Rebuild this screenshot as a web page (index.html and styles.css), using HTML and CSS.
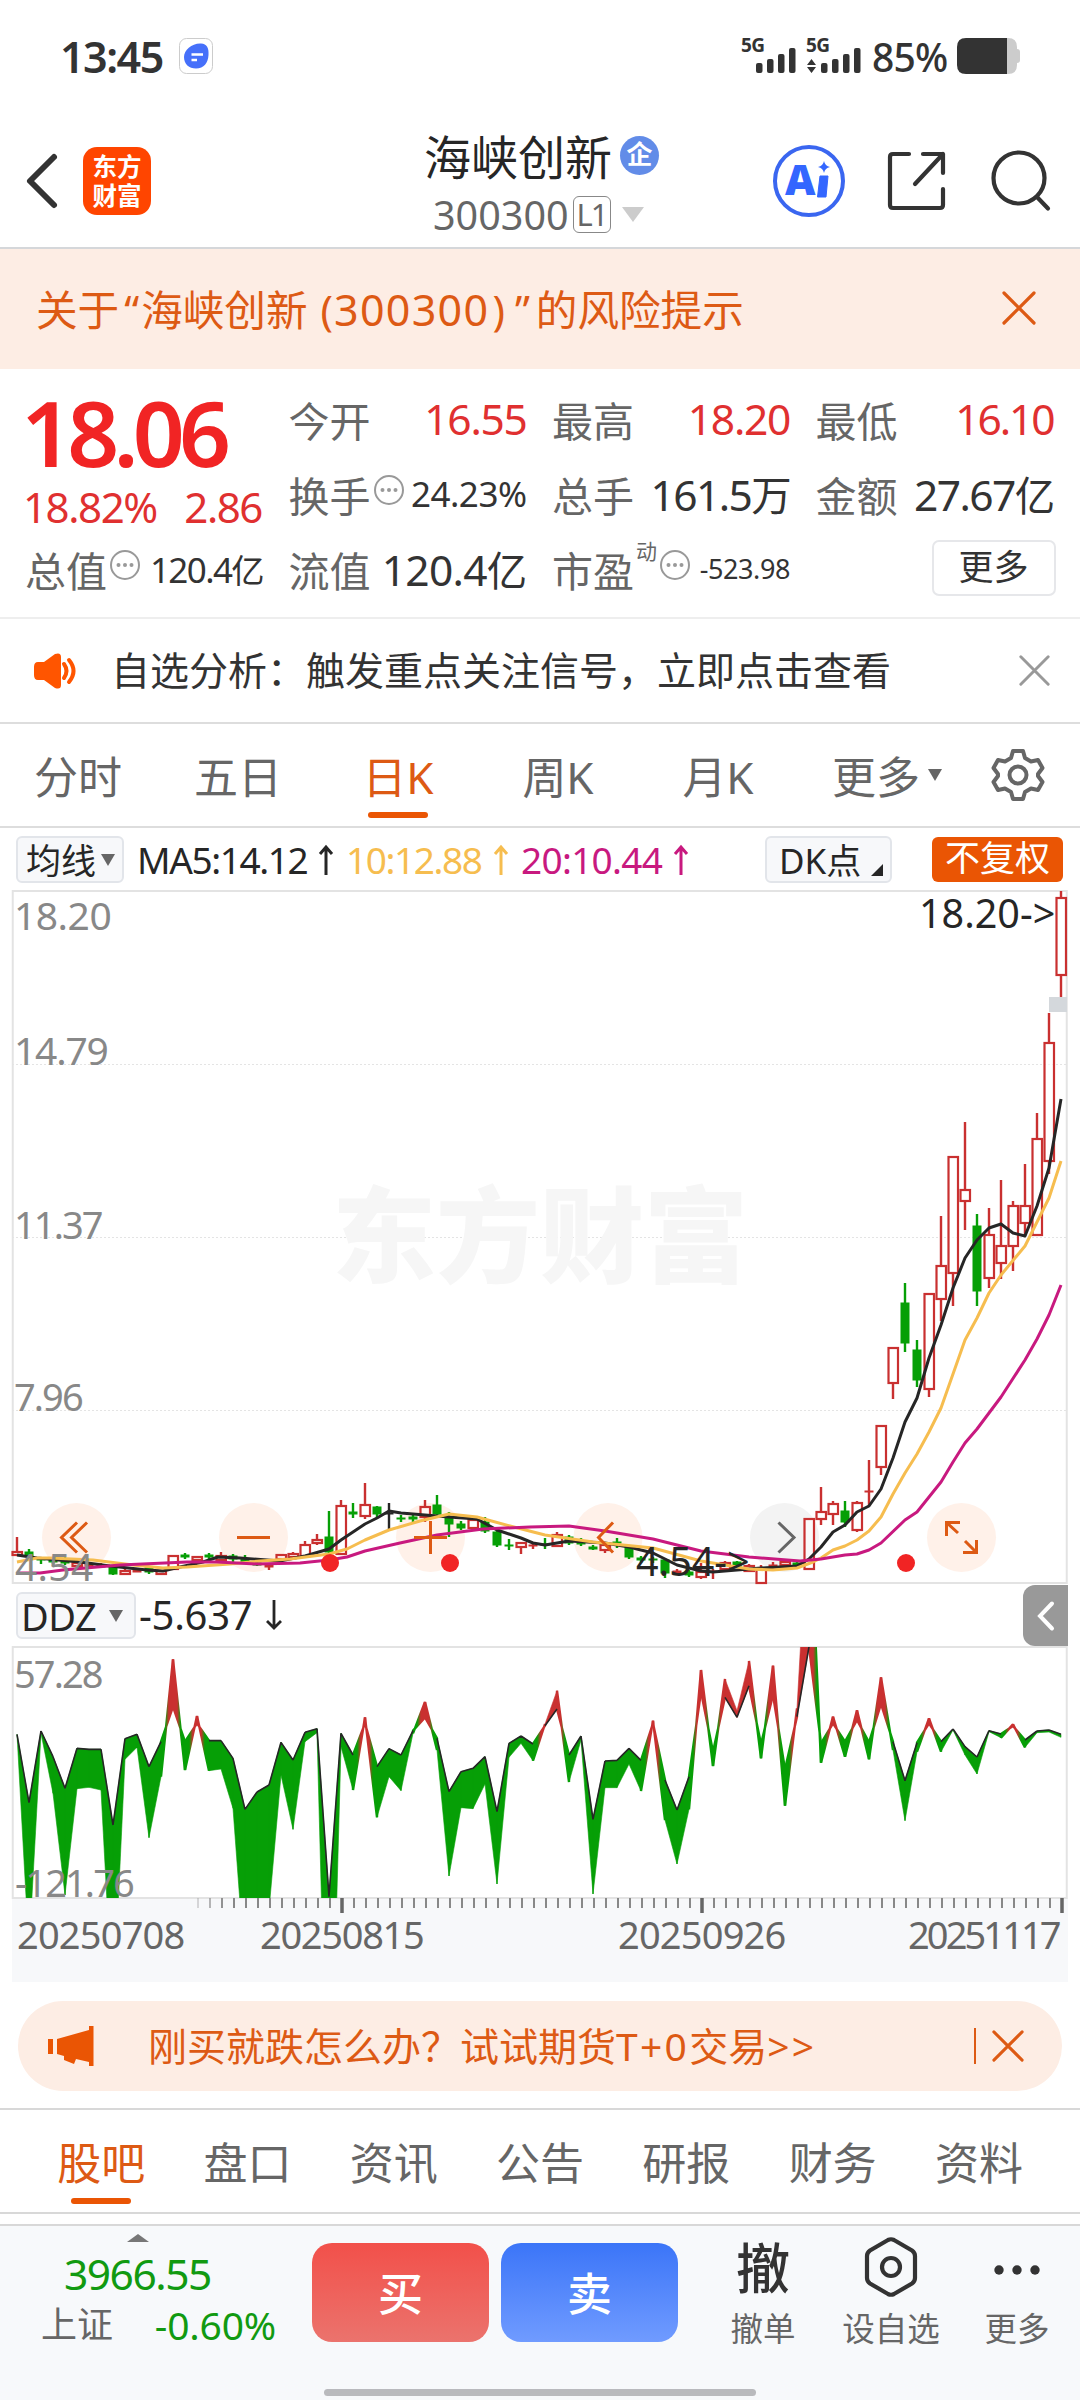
FILE: index.html
```html
<!DOCTYPE html>
<html lang="zh-CN">
<head>
    <meta charset="UTF-8">
    <meta name="viewport" content="width=device-width, initial-scale=1.0">
    <title>海峡创新 300300</title>
    <link rel="stylesheet" href="styles.css">
</head>
<body>
    <svg class="defs" width="0" height="0">
        <symbol id="close" viewBox="0 0 34 34">
            <path d="M2 2L32 32M32 2L2 32" fill="none" stroke="currentColor" stroke-width="3.2" stroke-linecap="round"/>
        </symbol>
        <symbol id="info" viewBox="0 0 32 32">
            <circle cx="16" cy="16" r="14" fill="none" stroke="#999" stroke-width="2"/>
            <circle cx="9.5" cy="16" r="2" fill="#999"/>
            <circle cx="16" cy="16" r="2" fill="#999"/>
            <circle cx="22.5" cy="16" r="2" fill="#999"/>
        </symbol>
    </svg>

    <!-- Barra de estado -->
    <div class="status-bar">
        <span class="clock">13:45</span>
        <svg class="app-badge" width="34" height="36" viewBox="0 0 34 36">
            <rect x="0.5" y="0.5" width="33" height="35" rx="7" fill="#fff" stroke="#ccc"/>
            <path d="M5 19C5 12 13 5 22 5.500C28 6 30 10 29.500 17C29 25 25 30.500 17 30.500C10 30.500 5 26 5 19Z" fill="#4670fa"/>
            <path d="M12.500 16.500H24M12.500 22H18" stroke="#fff" stroke-width="2.400"/>
        </svg>
        <svg class="signals" width="124" height="40" viewBox="740 38 124 40">
            <g fill="#333">
                <text x="741" y="54" class="net">5G</text>
                <rect x="756" y="65" width="6.500" height="10" rx="2"/>
                <rect x="767" y="61" width="6.500" height="14" rx="2"/>
                <rect x="778" y="56" width="6.500" height="19" rx="2"/>
                <rect x="789" y="50" width="6.500" height="25" rx="2"/>
                <text x="806" y="54" class="net">5G</text>
                <path d="M811.500 61L816 67H807ZM811.500 75L816 69H807Z"/>
                <rect x="821" y="65" width="6.500" height="10" rx="2"/>
                <rect x="832" y="61" width="6.500" height="14" rx="2"/>
                <rect x="843" y="56" width="6.500" height="19" rx="2"/>
                <rect x="854" y="50" width="6.500" height="25" rx="2"/>
            </g>
        </svg>
        <span class="battery-text">85%</span>
        <svg class="battery" width="63" height="36" viewBox="0 0 63 36">
            <path d="M50 0H51Q60 0 60 9V11Q63 11 63 14V22Q63 25 60 25V27Q60 36 51 36H50Z" fill="#ccc"/>
            <path d="M9 0H50V36H9Q0 36 0 27V9Q0 0 9 0Z" fill="#333"/>
        </svg>
    </div>

    <header class="header">
        <svg class="back" width="32" height="56" viewBox="0 0 32 56">
            <path d="M28 4L4 28L28 52" fill="none" stroke="#333" stroke-width="6" stroke-linecap="round" stroke-linejoin="round"/>
        </svg>
        <div class="logo">东方<br>财富</div>
        <div class="title">
            <div class="title-name">海峡创新<span class="badge">企</span></div>
            <div class="title-code">300300<span class="level">L1</span><i class="caret"></i></div>
        </div>
        <svg class="ai" width="74" height="74" viewBox="0 0 74 74">
            <circle cx="37" cy="37" r="34" fill="none" stroke="#3a66f0" stroke-width="4"/>
            <text x="13" y="51" class="ai-a">A</text>
            <path d="M48 32H56L54 53H45.500Z" fill="#3366ff" stroke="#3366ff" stroke-linejoin="round"/>
            <path d="M52 17Q53 22 58 23Q53 24 52 29Q51 24 46 23Q51 22 52 17Z" fill="#3366ff"/>
        </svg>
        <svg class="share" width="60" height="60" viewBox="0 0 60 60">
            <path d="M22 3H6Q3 3 3 6V54Q3 57 6 57H53Q56 57 56 54V38M36 3H56V22M56 3L28 33" fill="none" stroke="#333" stroke-width="4.200" stroke-linecap="round" stroke-linejoin="round"/>
        </svg>
        <svg class="search" width="60" height="62" viewBox="0 0 60 62">
            <circle cx="28" cy="28" r="25.500" fill="none" stroke="#333" stroke-width="4.200"/>
            <path d="M46 47L57 58.500" stroke="#333" stroke-width="4.200" stroke-linecap="round"/>
        </svg>
    </header>

    <div class="notice">
        <span class="notice-text">关于<i class="quote-l">“</i>海峡创新<i class="paren-l">(</i><i class="notice-code">300300</i><i class="paren-r">)</i><i class="quote-r">”</i>的风险提示</span>
        <svg width="34" height="34"><use href="#close"/></svg>
    </div>

    <!-- Cotización -->
    <section class="quote">
        <div class="quote-main">
            <div class="price">18.06</div>
            <div class="change"><span>18.82%</span><span>2.86</span></div>
        </div>
        <div class="cell"><label>今开</label><b class="up">16.55</b></div>
        <div class="cell"><label>最高</label><b class="up">18.20</b></div>
        <div class="cell"><label>最低</label><b class="up up-low">16.10</b></div>
        <div class="cell"><label>换手</label><svg class="info" width="32" height="32"><use href="#info"/></svg><b class="mid">24.23%</b></div>
        <div class="cell"><label>总手</label><b>161.5<u>万</u></b></div>
        <div class="cell"><label>金额</label><b>27.67<u>亿</u></b></div>
        <div class="cell"><label>总值</label><svg class="info" width="32" height="32"><use href="#info"/></svg><b class="mid mid-cap">120.4<u>亿</u></b></div>
        <div class="cell"><label>流值</label><b class="wide">120.4<u>亿</u></b></div>
        <div class="cell"><label>市盈</label><small>动</small><svg class="info" width="32" height="32"><use href="#info"/></svg><b class="tiny">-523.98</b></div>
        <div class="cell cell-more"><span class="more-btn">更多</span></div>
    </section>

    <div class="analysis">
        <svg width="46" height="38" viewBox="0 0 46 38">
            <path d="M5 10H11L22 2Q28 0 28 5V33Q28 38 22 36L11 28H5Q1 28 1 23V15Q1 10 5 10Z" fill="#ff5500"/>
            <path d="M31 12Q36 19 31 26M36 8Q45 19 36 30" fill="none" stroke="#ff5500" stroke-width="4" stroke-linecap="round"/>
        </svg>
        <span class="analysis-text">自选分析：触发重点关注信号，立即点击查看</span>
        <svg class="analysis-close" width="31" height="31"><use href="#close"/></svg>
    </div>

    <nav class="periods">
        <a>分时</a>
        <a>五日</a>
        <a class="active">日K</a>
        <a>周K</a>
        <a>月K</a>
        <a class="period-more">更多<i class="caret-sm"></i></a>
        <svg width="54" height="54" viewBox="0 0 54 54">
            <path d="M22 3H32L34 10L40 13.500L47 12L51.500 20L47 26V28L51.500 34L47 42L40 40.500L34 44L32 51H22L20 44L14 40.500L7 42L2.500 34L7 28V26L2.500 20L7 12L14 13.500L20 10Z" fill="none" stroke="#666" stroke-width="4" stroke-linejoin="round"/>
            <circle cx="27" cy="27" r="8.500" fill="none" stroke="#666" stroke-width="4"/>
        </svg>
    </nav>

    <!-- Gráfico principal -->
    <div class="indicator">
        <span class="chip"><u>均线</u><i class="caret-sm"></i></span>
        <span class="ma ma5">MA5:14.12<svg width="18" height="32" viewBox="0 0 18 32"><path d="M9 31V4M3 10L9 3L15 10" fill="none" stroke="currentColor" stroke-width="3"/></svg></span>
        <span class="ma ma10">10:12.88<svg width="18" height="32" viewBox="0 0 18 32"><path d="M9 31V4M3 10L9 3L15 10" fill="none" stroke="currentColor" stroke-width="3"/></svg></span>
        <span class="ma ma20">20:10.44<svg width="18" height="32" viewBox="0 0 18 32"><path d="M9 31V4M3 10L9 3L15 10" fill="none" stroke="currentColor" stroke-width="3"/></svg></span>
        <span class="chip chip-dk"><u>DK点</u><i class="corner"></i></span>
        <span class="chip-adjust">不复权</span>
    </div>

    <svg class="kline" id="kline" width="1056" height="694" viewBox="12 890 1056 694">
        <g stroke="#e4e4e4" stroke-dasharray="2 2">
            <path d="M12 1064.500H1067M12 1237.500H1067M12 1410.500H1067"/>
        </g>
        <rect x="12.750" y="891" width="1054" height="692" fill="none" stroke="#e3e3e3" stroke-width="2"/>
        <text x="332" y="1275" class="watermark">东方财富</text>
        <g fill="#fff1e9">
            <circle cx="76.500" cy="1537.500" r="34.500"/>
            <circle cx="253.500" cy="1537.500" r="34.500"/>
            <circle cx="430.500" cy="1537.500" r="34.500"/>
            <circle cx="608" cy="1537.500" r="34.500"/>
            <circle cx="784.500" cy="1537.500" r="34.500" fill="#f3f3f3"/>
            <circle cx="961.500" cy="1537.500" r="34.500"/>
        </g>
        <rect x="1049" y="997" width="18" height="15" fill="#d4d8dc"/>
        <g id="candles" stroke-width="2.400"></g>
        <g fill="none" stroke-width="3" stroke-linejoin="round">
            <path id="ma5" stroke="#262626"/>
            <path id="ma10" stroke="#f6bd4f"/>
            <path id="ma20" stroke="#c8197f"/>
        </g>
        <g fill="#f12424">
            <circle cx="330" cy="1563" r="9"/>
            <circle cx="450" cy="1563" r="9"/>
            <circle cx="906" cy="1563" r="9"/>
        </g>
        <g fill="none" stroke="#dd5a14" stroke-width="3">
            <path d="M77 1522.500L61.500 1537.500L77 1552.500M87 1522.500L71.500 1537.500L87 1552.500"/>
            <path d="M237 1537.500H270"/>
            <path d="M414 1537.500H447M430.500 1521V1554"/>
            <path d="M613 1522.500L598.500 1537.500L613 1552.500"/>
            <path d="M778.500 1522.500L794 1537.500L778.500 1552.500" stroke="#666"/>
            <path d="M946.500 1536V1522.500H960M946.500 1522.500L958 1533M976.500 1540V1552.500H963M976.500 1552.500L965 1541"/>
        </g>
        <g class="axis-label">
            <text x="14" y="930">18.20</text>
            <text x="14" y="1065" class="narrow">14.79</text>
            <text x="14" y="1239" class="narrower">11.37</text>
            <text x="14" y="1411" class="narrower">7.96</text>
            <text x="15" y="1581" class="low">4.54</text>
        </g>
        <text x="919" y="928" class="mark">18.20-&gt;</text>
        <text x="636" y="1576" class="mark">4.54-&gt;</text>
    </svg>

    <!-- DDZ -->
    <div class="ddz-row">
        <span class="chip chip-ddz">DDZ<i class="caret-sm"></i></span>
        <span class="ddz-value">-5.637<svg width="18" height="32" viewBox="0 0 18 32"><path d="M9 1V29M2 22L9 29L16 22" fill="none" stroke="currentColor" stroke-width="2.800"/></svg></span>
        <span class="side-toggle">
            <svg width="18" height="30" viewBox="0 0 18 30"><path d="M15 2.500L3 15L15 27.500" fill="none" stroke="#fff" stroke-width="4" stroke-linecap="round"/></svg>
        </span>
    </div>

    <svg class="ddz" id="ddz" width="1056" height="252" viewBox="12 -1 1056 252">
        <rect x="12.750" y="0" width="1054" height="251" fill="none" stroke="#e3e3e3" stroke-width="2"/>
        <g id="ddzArea"></g>
        <path id="ddzLine" fill="none" stroke="#262626" stroke-width="1.600"/>
        <g class="axis-label">
            <text x="14" y="41" class="narrower">57.28</text>
            <text x="15" y="250" class="narrower">-121.76</text>
        </g>
    </svg>

    <div class="dates">
        <svg id="ticks" width="1056" height="16" viewBox="12 0 1056 16"></svg>
        <div class="dates-row">
            <span>20250708</span>
            <span>20250815</span>
            <span>20250926</span>
            <span>20251117</span>
        </div>
    </div>

    <div class="promo">
        <svg width="46" height="40" viewBox="0 0 46 40">
            <path d="M0 13H5V28H0ZM9 13L41 4V0H45.500V40H41V36L28 33L26 38L16 34V30L9 28Z" fill="#ea5504"/>
        </svg>
        <span class="promo-text">刚买就跌怎么办？试试期货<i>T+0</i>交易<i>&gt;&gt;</i></span>
        <svg class="promo-close" width="33" height="33"><use href="#close"/></svg>
    </div>

    <nav class="tabs">
        <a class="active">股吧</a>
        <a>盘口</a>
        <a>资讯</a>
        <a>公告</a>
        <a>研报</a>
        <a>财务</a>
        <a>资料</a>
    </nav>

    <footer class="bottom">
        <div class="index">
            <i class="caret-up"></i>
            <div class="index-value">3966.55</div>
            <div class="index-row"><span>上证</span><b>-0.60%</b></div>
        </div>
        <a class="trade buy">买</a>
        <a class="trade sell">卖</a>
        <div class="action action-cancel">
            <span class="glyph">撤</span>
            <span>撤单</span>
        </div>
        <div class="action action-fav">
            <svg width="60" height="64" viewBox="0 0 60 64">
                <path d="M27 5Q30 3.500 33 5L51 15.500Q54 17.500 54 21V43Q54 46.500 51 48.500L33 59Q30 60.500 27 59L9 48.500Q6 46.500 6 43V21Q6 17.500 9 15.500Z" fill="none" stroke="#333" stroke-width="4.200"/>
                <circle cx="30" cy="32" r="9" fill="none" stroke="#333" stroke-width="4.200"/>
            </svg>
            <span>设自选</span>
        </div>
        <div class="action action-more">
            <svg width="60" height="64" viewBox="0 0 60 64">
                <circle cx="12" cy="35" r="4.700" fill="#333"/>
                <circle cx="30" cy="35" r="4.700" fill="#333"/>
                <circle cx="48" cy="35" r="4.700" fill="#333"/>
            </svg>
            <span>更多</span>
        </div>
        <div class="home-bar"></div>
    </footer>

    <script src="chart.js"></script>
</body>
</html>
```

FILE: styles.css
```css
* {
    box-sizing: border-box;
}
body {
    margin: 0;
    width: 1080px;
    height: 2400px;
    overflow: hidden;
    background-color: #fff;
    color: #333;
    font-family: 'Noto Sans', 'Noto Sans CJK SC', sans-serif;
}
svg {
    display: block;
    flex: none;
    overflow: visible;
}
i, u, b {
    font-style: normal;
    font-weight: normal;
    text-decoration: none;
}
.defs {
    position: absolute;
}

/* Barra de estado */
.status-bar {
    display: flex;
    align-items: center;
    height: 112px;
    padding: 0 60px;
}
.clock {
    width: 119px;
    font-size: 43px;
    font-weight: 600;
    letter-spacing: -1.5px;
}
.signals {
    margin-left: 527px;
}
.net {
    font-size: 19px;
    font-weight: 700;
    letter-spacing: -0.5px;
}
.battery-text {
    width: 93px;
    padding-left: 8px;
    font-size: 39px;
    font-weight: 500;
    letter-spacing: -0.8px;
}

/* Cabecera */
.header {
    display: flex;
    align-items: center;
    height: 137px;
    border-bottom: 2px solid #d5d7da;
    padding: 2px 0 0 26px;
}
.logo {
    width: 68px;
    height: 68px;
    margin-left: 25px;
    padding-top: 5px;
    border-radius: 14px;
    background-color: #ff4500;
    color: #fff;
    font-size: 24.500px;
    font-weight: 700;
    line-height: 29px;
    text-align: center;
}
.title {
    width: 252px;
    margin-left: 273px;
    padding-top: 2px;
}
.title-name, .title-code {
    display: flex;
    align-items: center;
    white-space: nowrap;
}
.title-name {
    height: 66px;
    padding-bottom: 5px;
    font-size: 47px;
    color: #262626;
}
.badge {
    width: 39px;
    height: 39px;
    margin: 3px 0 0 8px;
    border-radius: 50%;
    background-color: #628ce8;
    color: #fff;
    font-size: 26px;
    font-weight: 700;
    line-height: 36px;
    text-align: center;
}
.title-code {
    height: 50px;
    padding-left: 9px;
    font-size: 39.500px;
    color: #666;
}
.level {
    width: 38px;
    height: 37px;
    margin-left: 4px;
    border: 1.500px solid #888;
    border-radius: 6px;
    font-size: 31px;
    line-height: 34px;
    text-align: center;
    letter-spacing: -2px;
}
.caret {
    margin-left: 11px;
    border: 11px solid transparent;
    border-top: 15px solid #ccc;
    border-bottom: 0;
}
.ai {
    margin-left: 96px;
}
.ai-a {
    font-family: 'Noto Sans', sans-serif;
    font-size: 42px;
    font-weight: 900;
    fill: #3366ff;
}
.share {
    margin-left: 41px;
}
.search {
    margin-left: 44px;
}

/* Aviso */
.notice {
    display: flex;
    align-items: center;
    justify-content: space-between;
    height: 120px;
    padding: 0 44px 2px 36px;
    background-color: #fdede4;
    color: #dd5a14;
}
.notice-text {
    font-size: 41.600px;
    white-space: nowrap;
}
.quote-l {
    margin: 0 2px 0 5px;
}
.quote-r {
    margin: 0 6px 0 7px;
}
.notice-code {
    font-size: 43px;
    letter-spacing: 1.300px;
}
.paren-l {
    margin: 0 1px 0 13px;
}
.paren-r {
    margin: 0 3px 0 3px;
}

/* Cotización */
.quote {
    display: grid;
    grid-template-columns: 237px 237px 237px 237px;
    grid-template-rows: 75px 75px 75px;
    column-gap: 26.500px;
    height: 250px;
    padding: 12px 0 0 25px;
    border-bottom: 2px solid #eee;
}
.quote-main {
    grid-row: 1 / 3;
}
.price {
    height: 92px;
    margin: 5px 0 0 -4px;
    font-size: 91px;
    font-weight: 600;
    line-height: 92px;
    color: #f12424;
    letter-spacing: -5.800px;
}
.change {
    display: flex;
    justify-content: space-between;
    margin-left: -2px;
    font-size: 42px;
    line-height: 58px;
    color: #e03030;
    letter-spacing: -1.400px;
}
.cell {
    display: flex;
    align-items: center;
    white-space: nowrap;
}
.cell label {
    font-size: 41px;
    color: #666;
}
.cell b {
    margin: 0 -1px 0 auto;
    font-size: 42.500px;
    letter-spacing: -1.600px;
}
.cell u {
    font-size: 0.950em;
}
.cell .up {
    color: #e03030;
    letter-spacing: -1.300px;
}
.cell .up-low {
    letter-spacing: -2.100px;
}
.cell .wide {
    letter-spacing: -0.700px;
}
.cell .mid {
    font-size: 35px;
    letter-spacing: -0.500px;
}
.cell .mid-cap {
    letter-spacing: -1.600px;
}
.cell .tiny {
    font-size: 27px;
    letter-spacing: -0.400px;
}
.cell small {
    margin: 0 0 38px 2px;
    font-size: 21px;
    color: #666;
}
.info {
    margin: 0 -2px 7px 2px;
}
.cell-more {
    justify-content: flex-end;
}
.more-btn {
    width: 124px;
    height: 56px;
    margin: 0 -3px 2px 0;
    border: 2px solid #e6e7ea;
    border-radius: 7px;
    font-size: 35px;
    line-height: 50px;
    text-align: center;
}

/* Análisis */
.analysis {
    display: flex;
    align-items: center;
    height: 105px;
    padding: 0 30px 0 33px;
    border-bottom: 2px solid #ddd;
}
.analysis-text {
    margin: -5px 0 0 32px;
    font-size: 39px;
}
.analysis-close {
    margin-left: auto;
    color: #999;
}

/* Periodos */
.periods {
    display: flex;
    align-items: center;
    height: 104px;
    border-bottom: 2px solid #ddd;
    font-size: 44px;
    color: #666;
}
.periods a {
    width: 160px;
    text-align: center;
}
.periods a:first-child {
    margin-left: -2px;
}
.periods .active {
    color: #dd5a14;
}
.active::after {
    content: '';
    display: block;
    width: 60px;
    height: 6px;
    margin: 5px auto -11px;
    border-radius: 3px;
    background-color: #ea5504;
}
.periods .period-more {
    display: flex;
    align-items: center;
    width: 159px;
    margin: 0 0 0 34px;
}
.caret-sm {
    margin-left: 8px;
    border: 7.500px solid transparent;
    border-top: 12px solid #666;
    border-bottom: 0;
}

/* Indicadores */
.indicator, .ddz-row {
    display: flex;
    align-items: center;
    padding-left: 16px;
}
.indicator {
    height: 62px;
    padding-top: 1px;
    font-size: 37px;
    white-space: nowrap;
}
.chip {
    display: flex;
    align-items: center;
    width: 108px;
    height: 47px;
    padding-left: 8px;
    border: 2px solid #e2e5ea;
    border-radius: 6px;
    background-color: #f7f8fa;
    color: #262626;
    font-size: 35px;
}
.chip u {
    margin-top: -3px;
}
.chip .caret-sm {
    margin-left: 5px;
}
.ma {
    display: flex;
    align-items: center;
    letter-spacing: -1.400px;
}
.ma svg {
    margin-left: 10px;
}
.ma5 {
    width: 209px;
    margin-left: 13px;
    color: #262626;
}
.ma10 {
    width: 175px;
    color: #f6bd4f;
}
.ma20 {
    width: 244px;
    color: #c8197f;
    letter-spacing: -0.700px;
}
.chip-dk {
    width: 127px;
    padding-left: 12px;
}
.corner {
    margin: 20px 0 0 10px;
    border-left: 12px solid transparent;
    border-bottom: 12px solid #262626;
}
.chip-adjust {
    width: 131px;
    height: 45px;
    margin-left: 40px;
    border-radius: 6px;
    background-color: #ea5504;
    color: #fff;
    font-size: 35px;
    line-height: 41px;
    text-align: center;
}

/* Gráficos */
.kline, .ddz {
    margin-left: 12px;
}
.watermark {
    font-size: 104px;
    font-weight: 900;
    fill: #f6f6f6;
}
.axis-label {
    font-size: 39px;
    fill: #888;
    letter-spacing: -0.500px;
}
.axis-label .narrow {
    letter-spacing: -1.200px;
}
.axis-label .narrower {
    font-size: 38px;
    letter-spacing: -1.900px;
}
.axis-label .low {
    letter-spacing: 0.300px;
}
.mark {
    font-size: 39.500px;
    fill: #262626;
}
.ddz-row {
    height: 62px;
    padding-top: 1px;
}
.chip-ddz {
    width: 120px;
    padding-left: 3px;
    font-size: 38px;
    line-height: 38px;
    letter-spacing: -0.500px;
}
.chip-ddz .caret-sm {
    margin-left: 13px;
}
.ddz-value {
    display: flex;
    align-items: center;
    margin: -2px 0 0 3px;
    font-size: 40px;
    color: #262626;
    letter-spacing: -0.300px;
}
.ddz-value svg {
    margin-left: 13px;
}
.side-toggle {
    display: flex;
    align-items: center;
    width: 45px;
    height: 61px;
    margin: 0 12px 0 auto;
    padding-left: 14px;
    border-radius: 12px 0 0 12px;
    background-color: #999;
}
.dates {
    width: 1056px;
    height: 84px;
    margin-left: 12px;
    background-color: #f7f8fa;
}
.dates-row {
    display: flex;
    line-height: 40px;
    font-size: 38px;
    color: #666;
    letter-spacing: -0.800px;
}
.dates-row span {
    flex: none;
    width: 243px;
    padding-left: 5px;
}
.dates-row span:nth-child(2) {
    width: 358px;
    letter-spacing: -1.300px;
}
.dates-row span:nth-child(3) {
    width: 290px;
}
.dates-row span:nth-child(4) {
    width: 160px;
    letter-spacing: -2.900px;
}

/* Promoción */
.promo {
    display: flex;
    align-items: center;
    width: 1044px;
    height: 90px;
    margin: 19px 0 0 18px;
    padding: 0 38px 0 30px;
    border-radius: 45px;
    background-color: #fdede4;
    color: #dd5a14;
}
.promo-text {
    flex: 1;
    margin: -4px 0 0 54px;
    font-size: 39px;
}
.promo-text i {
    letter-spacing: 2.300px;
}
.promo-close {
    width: 50px;
    height: 36px;
    padding-left: 16px;
    border-left: 2px solid #dd5a14;
}

/* Pestañas */
.tabs {
    display: flex;
    align-items: center;
    height: 106px;
    margin-top: 17px;
    padding-left: 28px;
    border-top: 2px solid #d8d8d8;
    border-bottom: 2px solid #d8d8d8;
    font-size: 44px;
    color: #666;
}
.tabs a {
    width: 146.300px;
    text-align: center;
}
.tabs .active {
    color: #dd5a14;
}

/* Barra inferior */
.bottom {
    position: relative;
    display: flex;
    height: 176px;
    margin-top: 10px;
    border-top: 2px solid #d8d8d8;
    background-color: #f7f9fb;
}
.index {
    width: 312px;
    padding-left: 41px;
}
.caret-up {
    display: block;
    width: 0;
    margin: 8px 0 0 86px;
    border: 11px solid transparent;
    border-bottom: 8px solid #777;
    border-top: 0;
}
.index-value {
    margin: 4px 0 0 23px;
    font-size: 42.500px;
    line-height: 56px;
    color: #119a11;
    letter-spacing: -1.500px;
}
.index-row {
    display: flex;
    justify-content: space-between;
    width: 235px;
    font-size: 36px;
    line-height: 46px;
    color: #666;
}
.index-row b {
    font-size: 39px;
    color: #119a11;
    letter-spacing: -0.200px;
}
.trade {
    width: 177px;
    height: 99px;
    margin: 17px 12px 0 0;
    border-radius: 20px;
    color: #fff;
    font-size: 45px;
    font-weight: 500;
    line-height: 102px;
    text-align: center;
}
.buy {
    background: linear-gradient(#f2504a, #eb736d);
}
.sell {
    background: linear-gradient(#3b75f8, #709bff);
}
.action {
    display: flex;
    flex-direction: column;
    align-items: center;
    width: 110px;
    padding-top: 9px;
    font-size: 32.500px;
    line-height: 42px;
    color: #666;
}
.action-cancel {
    margin-left: 18px;
}
.action-fav {
    margin-left: 18px;
}
.action-more {
    margin-left: 16px;
}
.action svg, .glyph {
    height: 64px;
    margin-bottom: 9px;
}
.glyph {
    font-size: 54px;
    font-weight: 500;
    line-height: 67px;
    color: #333;
}
.home-bar {
    position: absolute;
    left: 324px;
    bottom: 4px;
    width: 432px;
    height: 7px;
    border-radius: 4px;
    background-color: #b9babd;
}
```

FILE: chart.js
```js
const RED = '#c93030';
const GREEN = '#069f06';
const NS = 'http://www.w3.org/2000/svg';
const x = i => 17 + i * 12;

// tipo, máximo, cuerpo arriba, cuerpo abajo, mínimo
const candles = [
    ['r', 1537, 1552, 1555, 1556], ['g', 1549, 1552, 1556, 1558], ['g', 1557, 1559, 1560, 1564],
    ['g', 1557, 1560, 1562, 1564], ['g', 1557, 1561, 1563, 1565], ['r', 1558, 1563, 1566, 1566],
    ['r', 1562, 1564, 1566, 1567], ['r', 1563, 1565, 1567, 1568], ['g', 1565, 1567, 1574, 1575],
    ['r', 1568, 1571, 1574, 1575], ['r', 1568, 1570, 1572, 1572], ['g', 1567, 1568, 1572, 1574],
    ['r', 1570, 1571, 1574, 1575], ['r', 1555, 1556, 1569, 1569], ['g', 1553, 1555, 1557, 1559],
    ['r', 1556, 1557, 1560, 1561], ['g', 1553, 1555, 1557, 1559], ['r', 1552, 1556, 1560, 1561],
    ['g', 1554, 1556, 1559, 1562], ['g', 1555, 1559, 1562, 1563], ['g', 1561, 1563, 1565, 1566],
    ['r', 1563, 1565, 1567, 1570], ['r', 1554, 1555, 1559, 1559], ['r', 1552, 1554, 1557, 1557],
    ['r', 1541, 1545, 1556, 1556], ['r', 1534, 1540, 1543, 1545], ['g', 1511, 1537, 1552, 1553],
    ['r', 1500, 1506, 1554, 1555], ['g', 1503, 1512, 1514, 1518], ['r', 1483, 1505, 1516, 1519],
    ['g', 1506, 1507, 1514, 1517], ['k', 1503, 1513, 1514, 1529], ['g', 1515, 1518, 1519, 1522],
    ['g', 1515, 1517, 1519, 1522], ['r', 1500, 1507, 1517, 1522], ['g', 1495, 1505, 1514, 1515],
    ['g', 1512, 1517, 1524, 1537], ['g', 1521, 1524, 1528, 1530], ['r', 1519, 1520, 1528, 1529],
    ['g', 1517, 1522, 1531, 1533], ['g', 1531, 1532, 1545, 1547], ['g', 1539, 1545, 1546, 1550],
    ['r', 1542, 1543, 1547, 1554], ['r', 1542, 1545, 1546, 1549], ['g', 1538, 1544, 1545, 1549],
    ['r', 1532, 1535, 1546, 1547], ['g', 1535, 1537, 1543, 1545], ['g', 1538, 1542, 1544, 1546],
    ['g', 1545, 1547, 1549, 1550], ['r', 1543, 1545, 1550, 1553], ['g', 1538, 1542, 1543, 1548],
    ['g', 1546, 1547, 1557, 1559], ['g', 1556, 1558, 1560, 1563], ['g', 1557, 1559, 1560, 1563],
    ['g', 1558, 1560, 1573, 1578], ['r', 1569, 1571, 1573, 1574], ['g', 1570, 1572, 1575, 1577],
    ['r', 1563, 1572, 1577, 1579], ['r', 1569, 1571, 1572, 1579], ['r', 1561, 1563, 1569, 1569],
    ['g', 1561, 1562, 1567, 1568], ['r', 1564, 1566, 1571, 1571], ['r', 1565, 1569, 1583, 1583],
    ['r', 1562, 1565, 1567, 1568], ['r', 1560, 1562, 1565, 1566], ['g', 1561, 1563, 1566, 1567],
    ['r', 1518, 1519, 1569, 1570], ['r', 1487, 1512, 1519, 1525], ['r', 1501, 1504, 1514, 1525],
    ['g', 1501, 1511, 1522, 1527], ['r', 1501, 1503, 1530, 1532], ['r', 1460, 1491, 1492, 1505],
    ['r', 1425, 1426, 1467, 1475], ['r', 1347, 1348, 1383, 1399], ['g', 1283, 1303, 1343, 1352],
    ['g', 1340, 1350, 1380, 1387], ['r', 1293, 1294, 1389, 1397], ['r', 1216, 1266, 1299, 1321],
    ['r', 1156, 1157, 1273, 1306], ['r', 1122, 1190, 1201, 1230], ['g', 1214, 1226, 1291, 1306],
    ['r', 1208, 1235, 1278, 1288], ['r', 1180, 1246, 1263, 1279], ['r', 1201, 1206, 1246, 1271],
    ['r', 1164, 1206, 1223, 1236], ['r', 1113, 1139, 1235, 1235], ['r', 1013, 1043, 1161, 1174],
    ['r', 891, 898, 975, 997]
];

const averages = {
    ma5: '17,1555 37,1558 80,1562 110,1566 147,1570 163,1571 180,1567 203,1562 218,1557 240,1558 267,1560 280,1561 305,1556 329,1549 341,1540 365,1524 377,1518 389,1511 401,1513 437,1516 449,1517 477,1519 497,1530 521,1538 533,1543 545,1545 569,1541 605,1543 629,1547 653,1553 677,1565 701,1571 713,1572 761,1568 797,1566 809,1559 821,1547 833,1532 845,1525 857,1512 869,1506 881,1489 893,1458 905,1422 917,1398 929,1358 941,1325 953,1288 965,1258 977,1240 989,1228 1001,1224 1013,1233 1025,1236 1037,1206 1049,1168 1061,1099',
    ma10: '17,1562 37,1558 50,1558 93,1560 133,1565 163,1568 187,1567 230,1564 260,1561 290,1559 329,1554 347,1549 365,1540 389,1530 420,1521 449,1514 477,1517 510,1526 545,1535 593,1542 633,1546 653,1548 701,1561 725,1565 749,1569 773,1570 797,1568 813,1562 821,1558 833,1550 845,1546 857,1540 869,1531 881,1517 893,1494 905,1473 917,1454 929,1432 941,1408 953,1374 965,1340 977,1318 989,1293 1001,1275 1025,1246 1049,1198 1061,1161',
    ma20: '17,1573 40,1573 63,1570 120,1565 187,1562 217,1562 257,1564 300,1563 329,1560 347,1557 365,1551 400,1543 437,1535 483,1529 530,1527 569,1526 605,1531 653,1539 701,1551 749,1557 800,1561 821,1559 845,1555 857,1554 869,1550 881,1543 905,1520 917,1512 929,1497 941,1482 953,1462 965,1443 977,1429 1001,1397 1025,1360 1037,1339 1049,1315 1061,1285'
};

// línea y borde del área, en tercios de píxel
const ddz = [
    [463, 463], [668, 1110], [453, 460], [530, 640], [625, 945], [505, 626], [508, 622], [508, 630],
    [735, 1300], [476, 538], [463, 502], [560, 773], [485, 590], [380, 238], [485, 570], [430, 408],
    [482, 572], [482, 567], [535, 685], [688, 1170], [636, 1300], [615, 990], [487, 585], [540, 748],
    [457, 485], [446, 458], [950, 1800], [460, 500], [525, 630], [430, 412], [560, 712], [506, 590],
    [525, 632], [452, 460], [412, 366], [475, 510], [635, 888], [575, 683], [565, 686], [530, 612],
    [695, 912], [490, 532], [468, 490], [492, 542], [437, 432], [387, 332], [525, 606], [468, 480],
    [718, 942], [543, 623], [541, 623], [505, 552], [541, 633], [430, 422], [600, 720], [690, 852],
    [590, 688], [335, 270], [515, 558], [352, 297], [412, 392], [317, 243], [492, 535], [345, 257],
    [568, 677], [410, 385], [200, -250], [490, 548], [430, 410], [485, 530], [420, 391], [487, 538],
    [372, 292], [485, 510], [602, 722], [488, 515], [430, 415], [485, 515], [447, 450], [500, 525],
    [531, 582], [452, 455], [462, 473], [438, 433], [480, 502], [453, 458], [450, 456], [463, 472]
];

function add(parent, name, attrs) {
    const el = document.createElementNS(NS, name);
    for (const key in attrs) {
        el.setAttribute(key, attrs[key]);
    }
    parent.appendChild(el);
    return el;
}

function drawCandles() {
    const box = document.getElementById('candles');
    candles.forEach(([type, high, top, bottom, low], i) => {
        const color = { r: RED, g: GREEN, k: '#262626' }[type];
        add(box, 'path', {
            d: `M${x(i)} ${high}V${top}M${x(i)} ${bottom}V${low}`,
            stroke: color
        });
        const hollow = type === 'r' && bottom - top > 2;
        add(box, 'rect', {
            x: x(i) - (hollow ? 4.5 : 4),
            y: top,
            width: hollow ? 9.5 : 8,
            height: bottom - top,
            fill: hollow ? '#fff' : color,
            'fill-opacity': hollow ? 0.6 : 1,
            stroke: color,
            'stroke-width': hollow ? 2.2 : 1
        });
    });
    for (const id in averages) {
        document.getElementById(id).setAttribute('d', 'M' + averages[id].split(' ').join('L'));
    }
}

function drawDdz() {
    const area = document.getElementById('ddzArea');
    const svg = document.getElementById('ddz');
    const y = v => v / 3 - 67;
    const defs = add(svg, 'defs', {});
    const clip = add(defs, 'clipPath', { id: 'ddzClip' });
    add(clip, 'rect', { x: 12, y: 0, width: 1056, height: 251 });
    area.setAttribute('clip-path', 'url(#ddzClip)');

    let line = '';
    for (let i = 0; i < ddz.length - 1; i++) {
        const [l1, e1] = ddz[i];
        const [l2, e2] = ddz[i + 1];
        const c1 = e1 < l1 ? RED : GREEN;
        const c2 = e2 < l2 ? RED : GREEN;
        let fill = c1;
        if (c1 !== c2) {
            fill = `url(#g${i})`;
            const grad = add(defs, 'linearGradient', {
                id: 'g' + i, gradientUnits: 'userSpaceOnUse', x1: x(i), x2: x(i + 1), y1: 0, y2: 0
            });
            add(grad, 'stop', { offset: 0.35, 'stop-color': c1 });
            add(grad, 'stop', { offset: 0.65, 'stop-color': c2 });
        } else {
            line += `M${x(i)} ${y(l1)}L${x(i + 1)} ${y(l2)}`;
        }
        add(area, 'path', {
            d: `M${x(i)} ${y(l1)}L${x(i + 1)} ${y(l2)}V${y(e2)}L${x(i)} ${y(e1)}Z`,
            fill: fill,
            stroke: fill,
            'stroke-width': c1 !== c2 ? 2.4 : 0.6,
            'stroke-linejoin': 'bevel'
        });
    }
    const path = document.getElementById('ddzLine');
    path.setAttribute('d', line);
    path.setAttribute('clip-path', 'url(#ddzClip)');
}

function drawTicks() {
    const svg = document.getElementById('ticks');
    for (let i = 15; i < 88; i++) {
        const long = i === 27 || i === 57 || i === 87;
        add(svg, 'path', {
            d: `M${x(i) + 1} 0V${long ? 15 : 10}`,
            stroke: long ? '#666' : '#888',
            'stroke-width': long ? 3.5 : 2,
            opacity: Math.min(1, (i - 14) * 0.3)
        });
    }
}

drawCandles();
drawDdz();
drawTicks();
```
